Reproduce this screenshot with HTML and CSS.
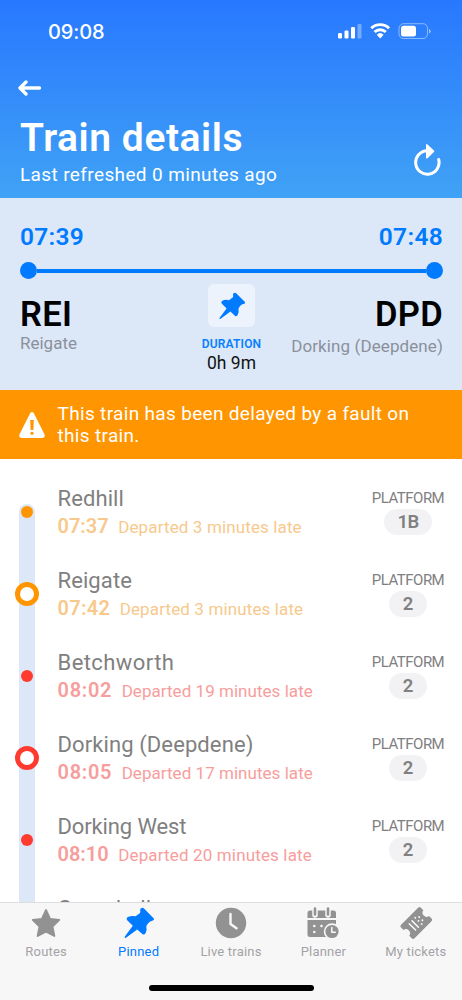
FILE: index.html
```html
<!DOCTYPE html>
<html lang="en">
<head>
<meta charset="utf-8">
<meta name="viewport" content="width=device-width, initial-scale=1">
<title>Train details</title>
<link rel="stylesheet" href="styles.css">
</head>
<body>
<svg class="defs" width="0" height="0" aria-hidden="true">
  <symbol id="pin" viewBox="0 0 32 32">
    <path d="M17.800 1.500Q19.500 .2 21 1.600L30.600 11.200Q31.800 12.800 30 13.500Q26.800 14 25 16.400L23.300 19Q24.200 22.500 22.600 26Q21.300 28.600 19.300 27L14.200 22.400L3 30.700Q1.300 31.500 1.700 29.800L9.800 18.800L4.200 13.200Q2.800 11 5 10Q8.500 8.300 12.500 9.300L16.800 6.300Q17.800 5.300 17.200 3.500Q17 2.200 17.800 1.500Z" fill="currentColor"/>
  </symbol>
</svg>
<header class="header">
  <div class="status">
    <span class="clock">09:08</span>
    <svg class="status-icons" width="94" height="18" viewBox="0 0 94 18" fill="#fff">
      <rect x="0" y="11" width="4" height="5.500" rx="1.200"/>
      <rect x="6.500" y="8.500" width="4" height="8" rx="1.200"/>
      <rect x="13" y="5" width="4" height="11.500" rx="1.200"/>
      <rect x="19.500" y="2" width="4" height="14.500" rx="1.200" opacity=".35"/>
      <g fill="none" stroke="#fff" stroke-width="2.900">
        <path d="M33.300 6.300a12.500 12.500 0 0 1 17.800 0"/>
        <path d="M36.600 10a8 8 0 0 1 11.200 0"/>
      </g>
      <path d="M38.800 12.700a5 5 0 0 1 6.800 0L42.200 16.400z"/>
      <rect x="61" y="1.700" width="28.500" height="14.800" rx="4.500" fill="none" stroke="#fff" opacity=".45"/>
      <rect x="63" y="3.700" width="15" height="10.800" rx="2.500"/>
      <path d="M91 6.800q1.700.8 1.700 2.400T91 11.600z" opacity=".5"/>
    </svg>
  </div>
  <svg class="back" width="24" height="18" viewBox="0 0 24 18" fill="none" stroke="#fff" stroke-width="3.300" stroke-linecap="round" stroke-linejoin="round"><path d="M21.500 9H3M8 3L2 9l6 6"/></svg>
  <div class="heading">
    <div>
      <h1 class="title">Train details</h1>
      <p class="refreshed">Last refreshed 0 minutes ago</p>
    </div>
    <svg class="reload" width="28" height="34" viewBox="0 0 28 34"><path d="M14 7.800A11.700 11.700 0 1 0 25.700 16.500" fill="none" stroke="#fff" stroke-width="3" stroke-linecap="round"/><path d="M13 2Q13 .5 14.500 1.500L21 7.500Q21.800 8.300 21 9L14.500 15.200Q13 16.300 13 14.600Z" fill="#fff"/></svg>
  </div>
</header>
<section class="journey">
  <div class="times"><span>07:39</span><span class="arrive">07:48</span></div>
  <div class="line"><i class="end"></i><i class="bar"></i><i class="end"></i></div>
  <div class="places">
    <div class="from"><div class="code">REI</div><div class="place place-from">Reigate</div></div>
    <div class="duration">
      <div class="pinbox"><svg width="28" height="28"><use href="#pin"/></svg></div>
      <div class="dur-label">DURATION</div>
      <div class="dur-value">0h 9m</div>
    </div>
    <div class="to"><div class="code">DPD</div><div class="place place-to">Dorking (Deepdene)</div></div>
  </div>
</section>
<section class="alert">
  <svg width="26" height="26" viewBox="0 0 26 26"><path d="M11.300 1.100Q13-1 14.700 1.100L25.600 22.500Q26.500 25.800 23.500 26H2.500Q-.5 25.800 .4 22.500Z" fill="#fff"/><path d="M11.200 8h3.600L14.400 18H11.600Z" fill="#ff9500"/><rect x="11.400" y="19.700" width="3.200" height="3" rx="1.500" fill="#ff9500"/></svg>
  <p class="alert-text">This train has been delayed by a fault on<br>this train.</p>
</section>
<main class="stops">
  <article class="stop late first">
    <div class="track"><i class="dot"></i></div>
    <div class="info"><div class="name">Redhill</div><div class="when"><b class="narrow">07:37</b><span>Departed 3 minutes late</span></div></div>
    <div class="platform"><span class="plabel">PLATFORM</span><span class="pnum wide">1B</span></div>
  </article>
  <article class="stop late">
    <div class="track"><i class="ring"></i></div>
    <div class="info"><div class="name">Reigate</div><div class="when"><b class="medium">07:42</b><span>Departed 3 minutes late</span></div></div>
    <div class="platform"><span class="plabel">PLATFORM</span><span class="pnum">2</span></div>
  </article>
  <article class="stop very-late">
    <div class="track"><i class="dot"></i></div>
    <div class="info"><div class="name loose">Betchworth</div><div class="when"><b>08:02</b><span>Departed 19 minutes late</span></div></div>
    <div class="platform"><span class="plabel">PLATFORM</span><span class="pnum">2</span></div>
  </article>
  <article class="stop very-late">
    <div class="track"><i class="ring"></i></div>
    <div class="info"><div class="name">Dorking (Deepdene)</div><div class="when"><b>08:05</b><span>Departed 17 minutes late</span></div></div>
    <div class="platform"><span class="plabel">PLATFORM</span><span class="pnum">2</span></div>
  </article>
  <article class="stop very-late">
    <div class="track"><i class="dot"></i></div>
    <div class="info"><div class="name tight">Dorking West</div><div class="when"><b class="narrow">08:10</b><span class="spaced">Departed 20 minutes late</span></div></div>
    <div class="platform"><span class="plabel">PLATFORM</span><span class="pnum">2</span></div>
  </article>
  <article class="stop">
    <div class="track"></div>
    <div class="info"><div class="name">Gomshall</div><div class="when"></div></div>
  </article>
</main>
<nav class="tabs">
  <a class="tab"><svg width="32" height="32" viewBox="0 0 32 32"><path d="M16 3L20.100 11.800L29.300 12.900L22.500 19.500L24.400 29L16 24.600L7.600 29L9.500 19.500L2.700 12.900L11.900 11.800Z" fill="currentColor" stroke="currentColor" stroke-width="1.800" stroke-linejoin="round"/></svg><span>Routes</span></a>
  <a class="tab active"><svg width="32" height="32"><use href="#pin"/></svg><span>Pinned</span></a>
  <a class="tab"><svg width="32" height="32" viewBox="0 0 32 32"><circle cx="16" cy="16" r="15.200" fill="currentColor"/><path d="M15.500 7v10l6 4.300" fill="none" stroke="#f8f8f8" stroke-width="2.400" stroke-linecap="round" stroke-linejoin="round"/></svg><span>Live trains</span></a>
  <a class="tab"><svg width="32" height="32" viewBox="0 0 32 32"><path d="M.5 11V6Q.5 3.500 3 3.500H26.500Q29 3.500 29 6V11Z" fill="currentColor"/><path d="M8 2v6M21 2v6" stroke="#f8f8f8" stroke-width="5.500" stroke-linecap="round"/><path d="M8 1.500v6M21 1.500v6" stroke="currentColor" stroke-width="2.600" stroke-linecap="round"/><path d="M.5 13H29V30H3Q.5 30 .5 27.500Z" fill="currentColor"/><g fill="#f8f8f8"><circle cx="7.300" cy="19" r="1.300"/><circle cx="14.500" cy="19" r="1.300"/><circle cx="7.300" cy="25" r="1.300"/><circle cx="25" cy="24.500" r="8.200"/></g><circle cx="25" cy="24.500" r="6.600" fill="currentColor"/><path d="M24.800 20.500v4.800h3.500" fill="none" stroke="#f8f8f8" stroke-width="1.500" stroke-linecap="round"/></svg><span>Planner</span></a>
  <a class="tab"><svg width="32" height="32" viewBox="0 0 32 32"><g transform="translate(16.300 16) rotate(-45)"><path d="M-12-9.500H12Q14-9.500 14-7.500V-4Q10.500-3.500 10.500 0T14 4V7.500Q14 9.500 12 9.500H-12Q-14 9.500-14 7.500V4Q-10.500 3.500-10.500 0T-14-4V-7.500Q-14-9.500-12-9.500Z" fill="currentColor"/><g stroke="#f8f8f8" stroke-width="1.500" stroke-linecap="round"><path d="M-5.500-4.500v9M-1.500-4.500v9"/><path d="M3-4.500v.1M3 0v.1M3 4.500v.1M6.300-2.200v.1M6.300 2.300v.1" stroke-width="1.800"/></g></g></svg><span>My tickets</span></a>
  <i class="home"></i>
</nav>
</body>
</html>
```
FILE: styles.css
```css
* { box-sizing: border-box; }
body {
  margin: 0;
  width: 462px;
  height: 1000px;
  overflow: hidden;
  display: flex;
  flex-direction: column;
  background: #fff;
  font-family: Roboto, "Liberation Sans", sans-serif;
}
h1, p { margin: 0; }
i { display: block; }
.defs { display: none; }

.header {
  flex: none;
  height: 198px;
  padding: 20px 20px 0;
  background: linear-gradient(#2878ff, #40a2f5);
  color: #fff;
}
.status { display: flex; justify-content: space-between; height: 24px; padding: 0 10px 0 28px; }
.clock { font: 500 20px/24px Inter, sans-serif; letter-spacing: -.1px; }
.status-icons { margin-top: 2px; }
.back { display: block; margin: 35px 0 0 -2px; }
.heading { display: flex; justify-content: space-between; }
.title { margin-top: 19px; font-size: 39px; line-height: 44px; font-weight: 600; letter-spacing: .55px; white-space: nowrap; }
.refreshed { margin-top: 3px; font-size: 19px; line-height: 24px; letter-spacing: .38px; white-space: nowrap; }
.reload { margin: 46px 1px 0 0; }

.journey { flex: none; height: 192px; padding: 24px 19px 0 20px; background: #dce8f8; }
.times { display: flex; justify-content: space-between; color: #007aff; font-size: 24.500px; line-height: 30px; font-weight: 600; letter-spacing: .3px; }
.line { display: flex; align-items: center; height: 17px; margin-top: 10px; }
.end { width: 17px; height: 17px; border-radius: 50%; background: #007aff; }
.bar { flex: 1; height: 4px; background: #007aff; }
.places { display: grid; grid-template-columns: 1fr 64px 1fr; margin-top: 5px; }
.code { margin-top: 11px; font-size: 34.500px; line-height: 38px; font-weight: 600; letter-spacing: .3px; color: #000; }
.place { font-size: 17px; line-height: 22px; color: #8b909a; white-space: nowrap; }
.place-from { margin-top: -1px; }
.place-to { margin-top: 2px; letter-spacing: .1px; }
.to { display: flex; flex-direction: column; align-items: flex-end; }
.duration { display: flex; flex-direction: column; align-items: center; }
.pinbox { display: flex; align-items: center; justify-content: center; width: 47px; height: 43px; border-radius: 6px; background: #edf3fc; color: #007aff; }
.dur-label { margin-top: 9px; font-size: 12px; line-height: 16px; font-weight: 600; letter-spacing: .15px; color: #087fff; }
.dur-value { font-size: 17.500px; line-height: 22px; color: #111; }

.alert { flex: none; display: flex; align-items: center; gap: 12.500px; height: 69px; padding: 0 19px; background: #ff9500; color: #fff; }
.alert-text { font-size: 19px; line-height: 22px; white-space: nowrap; letter-spacing: .33px; }

.stops { flex: 1; min-height: 0; overflow: hidden; padding: 12px 18px 0 18.500px; }
.stop { display: grid; grid-template-columns: 16px 1fr 72px; column-gap: 23px; height: 82px; align-items: center; }
.track { display: flex; align-items: center; justify-content: center; align-self: stretch; background: #dce8f8; }
.first .track { margin-top: 33px; align-items: flex-start; border-radius: 8px 8px 0 0; padding-top: 2px; }
.late { --tone: #ff9500; --soft: #f7c98c; }
.very-late { --tone: #ff3b30; --soft: #f79d9c; }
.dot { flex: none; width: 12px; height: 12px; border-radius: 50%; background: var(--tone); }
.ring { flex: none; width: 24px; height: 24px; border-radius: 50%; border: 5px solid var(--tone); background: #fff; }
.info { white-space: nowrap; }
.name { font-size: 22px; line-height: 28px; letter-spacing: .1px; color: #808080; }
.name.loose { letter-spacing: .43px; }
.name.tight { letter-spacing: -.12px; }
.when { display: flex; align-items: baseline; gap: 9.500px; height: 26px; font-size: 17px; line-height: 26px; letter-spacing: .13px; color: var(--soft); }
.very-late .when { letter-spacing: .04px; }
.very-late .when .spaced { letter-spacing: .15px; }
.when b, .very-late .when b { font-size: 20px; font-weight: 600; letter-spacing: .7px; }
.when b.narrow, .very-late .when b.narrow { letter-spacing: 0; }
.when b.medium { letter-spacing: .3px; }
.platform { display: flex; flex-direction: column; align-items: center; margin-top: -2px; }
.plabel { font-size: 15px; line-height: 20px; letter-spacing: -.5px; color: #808080; }
.pnum { display: flex; justify-content: center; width: 38px; height: 26px; margin-top: 1px; border-radius: 13px; background: #f2f2f4; color: #808080; font-size: 18.500px; line-height: 26px; font-weight: 600; }
.wide { width: 48px; letter-spacing: -.7px; }

.tabs { position: relative; flex: none; display: grid; grid-template-columns: repeat(5, 1fr); height: 98px; border-top: 1px solid #dedee0; background: #f8f7f8; }
.tab { display: flex; flex-direction: column; align-items: center; padding-top: 4px; color: #929292; }
.tab span { margin-top: 5px; font-size: 13px; line-height: 16px; color: #a3a3a5; white-space: nowrap; letter-spacing: .2px; }
.tab.active, .tab.active span { color: #007aff; }
.home { position: absolute; left: 149px; bottom: 9px; width: 165px; height: 6px; border-radius: 3px; background: #000; }
```
